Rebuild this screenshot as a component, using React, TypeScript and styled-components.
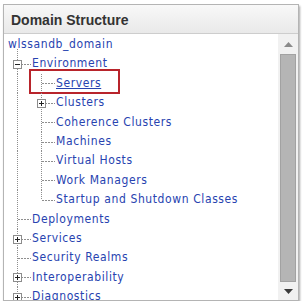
import React from "react";
import styled, {createGlobalStyle} from "styled-components";

type GuideKind = "pipe" | "tee" | "elbow";

type TreeRow = {
    label: string,
    guides: GuideKind[],
    box?: "plus" | "minus",
    underline?: boolean,
    marked?: boolean
};

const rows: TreeRow[] = [
    {label: "wlssandb_domain", guides: []},
    {label: "Environment", guides: ["tee"], box: "minus"},
    {label: "Servers", guides: ["pipe", "tee"], underline: true, marked: true},
    {label: "Clusters", guides: ["pipe", "tee"], box: "plus"},
    {label: "Coherence Clusters", guides: ["pipe", "tee"]},
    {label: "Machines", guides: ["pipe", "tee"]},
    {label: "Virtual Hosts", guides: ["pipe", "tee"]},
    {label: "Work Managers", guides: ["pipe", "tee"]},
    {label: "Startup and Shutdown Classes", guides: ["pipe", "elbow"]},
    {label: "Deployments", guides: ["tee"]},
    {label: "Services", guides: ["tee"], box: "plus"},
    {label: "Security Realms", guides: ["tee"]},
    {label: "Interoperability", guides: ["tee"], box: "plus"},
    {label: "Diagnostics", guides: ["elbow"], box: "plus"},
];

const ExpandIcon = ({open}: { open: boolean }) => (
    <svg width="9" height="9" viewBox="0 0 9 9">
        <rect x="0.5" y="0.5" width="8" height="8" fill="#fff" stroke="#8c8c8c"/>
        <line x1="2" y1="4.5" x2="7" y2="4.5" stroke="#222"/>
        {!open && <line x1="4.5" y1="2" x2="4.5" y2="7" stroke="#222"/>}
    </svg>
);

export default function App() {
    return <>
        <GlobalStyle/>
        <Page>
            <Panel>
                <Header>Domain Structure</Header>
                <Body>
                    <Tree>
                        {rows.map((row, key) => (
                            <Row key={key}>
                                {row.guides.map((kind, i) => (
                                    <Guide key={i} $kind={kind} $stub={key === 1 && i === 0}>
                                        {row.box && i === row.guides.length - 1 &&
                                            <Expander><ExpandIcon open={row.box === "minus"}/></Expander>}
                                    </Guide>
                                ))}
                                <Label $underline={row.underline}>{row.label}</Label>
                                {row.marked && <Highlight/>}
                            </Row>
                        ))}
                    </Tree>
                    <ScrollTrack>
                        <ArrowButton $height={20}>
                            <svg width="9" height="5" viewBox="0 0 9 5">
                                <polygon points="0,5 9,5 4.5,0" fill="#8a8a8a"/>
                            </svg>
                        </ArrowButton>
                        <Thumb/>
                        <ArrowButton $height={18}>
                            <svg width="9" height="5" viewBox="0 0 9 5">
                                <polygon points="0,0 9,0 4.5,5" fill="#3a3a3a"/>
                            </svg>
                        </ArrowButton>
                    </ScrollTrack>
                </Body>
            </Panel>
        </Page>
    </>;
}

const GlobalStyle = createGlobalStyle`
    html, body {
        margin: 0;
        padding: 0;
        background: #fff;
    }
`;

const Page = styled.div`
    padding: 4px 0 0 3px;
`;

const Panel = styled.div`
    width: 296px;
    height: 297px;
    box-sizing: border-box;
    border: 1px solid #b4b4b4;
    background: #fff;
    box-shadow: 1px 2px 2px rgba(0, 0, 0, 0.35);
    display: flex;
    flex-direction: column;
    overflow: hidden;
`;

const Header = styled.div`
    height: 27px;
    flex: 0 0 auto;
    display: flex;
    align-items: center;
    padding: 1px 0 0 7px;
    border-bottom: 1px solid #cdcdcd;
    background: linear-gradient(#f8f8f8, #e9e9e9);
    color: #333;
    font: bold 14px "Liberation Sans", Arial, sans-serif;
`;

const Body = styled.div`
    flex: 1;
    display: flex;
    min-height: 0;
`;

const Tree = styled.div`
    flex: 1;
    overflow: hidden;
    padding: 1px 0 0 1px;
`;

const Row = styled.div`
    position: relative;
    display: flex;
    height: 19.4px;
`;

const Guide = styled.div<{ $kind: GuideKind, $stub?: boolean }>`
    position: relative;
    width: 24px;
    flex: 0 0 24px;

    &::before {
        content: "";
        position: absolute;
        left: 12px;
        top: ${p => p.$stub ? "-5px" : "0"};
        width: 1px;
        bottom: ${p => p.$kind === "elbow" ? "50%" : "0"};
        background-image: linear-gradient(to bottom, #8e8e8e 50%, transparent 0);
        background-size: 1px 2px;
    }

    &::after {
        content: "";
        display: ${p => p.$kind === "pipe" ? "none" : "block"};
        position: absolute;
        left: 13px;
        right: -2px;
        top: 50%;
        height: 1px;
        background-image: linear-gradient(to right, #8e8e8e 67%, transparent 0);
        background-size: 3px 1px;
    }
`;

const Expander = styled.span`
    position: absolute;
    left: 8px;
    top: calc(50% - 4px);
    width: 9px;
    height: 9px;
    z-index: 1;
    display: flex;
`;

const Label = styled.span<{ $underline?: boolean }>`
    padding-left: 3px;
    white-space: nowrap;
    color: #2743b0;
    font: 12px/19.4px "DejaVu Sans Condensed", "DejaVu Sans", sans-serif;
    letter-spacing: 0.6px;
    text-decoration: ${p => p.$underline ? "underline" : "none"};
`;

const Highlight = styled.div`
    position: absolute;
    left: 24px;
    top: -5px;
    width: 91px;
    height: 25px;
    box-sizing: border-box;
    border: 2px solid #b8242b;
    pointer-events: none;
`;

const ScrollTrack = styled.div`
    width: 20px;
    flex: 0 0 20px;
    display: flex;
    flex-direction: column;
    background: #f1f1f1;
`;

const ArrowButton = styled.div<{ $height: number }>`
    height: ${p => p.$height}px;
    flex: 0 0 auto;
    display: flex;
    align-items: center;
    justify-content: center;
`;

const Thumb = styled.div`
    flex: 1;
    margin: 0 2px 0 2px;
    background: #b5b5b5;
    border: 1px solid #a2a2a2;
`;
